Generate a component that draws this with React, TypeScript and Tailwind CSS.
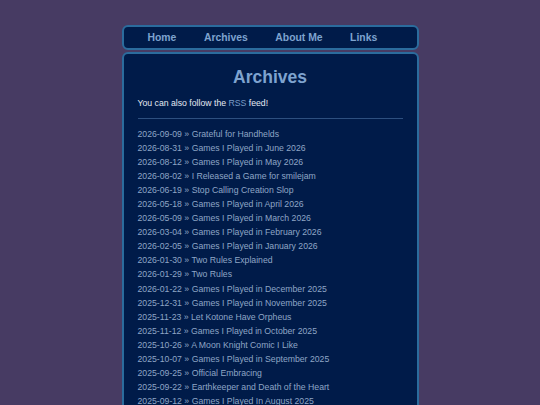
import React from "react";

const posts: [string, string][] = [
  ["2026-09-09", "Grateful for Handhelds"],
  ["2026-08-31", "Games I Played in June 2026"],
  ["2026-08-12", "Games I Played in May 2026"],
  ["2026-08-02", "I Released a Game for smilejam"],
  ["2026-06-19", "Stop Calling Creation Slop"],
  ["2026-05-18", "Games I Played in April 2026"],
  ["2026-05-09", "Games I Played in March 2026"],
  ["2026-03-04", "Games I Played in February 2026"],
  ["2026-02-05", "Games I Played in January 2026"],
  ["2026-01-30", "Two Rules Explained"],
  ["2026-01-29", "Two Rules"],
  ["2026-01-22", "Games I Played in December 2025"],
  ["2025-12-31", "Games I Played in November 2025"],
  ["2025-11-23", "Let Kotone Have Orpheus"],
  ["2025-11-12", "Games I Played in October 2025"],
  ["2025-10-26", "A Moon Knight Comic I Like"],
  ["2025-10-07", "Games I Played in September 2025"],
  ["2025-09-25", "Official Embracing"],
  ["2025-09-22", "Earthkeeper and Death of the Heart"],
  ["2025-09-12", "Games I Played In August 2025"],
];

export default function App() {
  return (
    <div
      className="min-h-screen bg-[#473b63] pt-[25px]"
      style={{ fontFamily: '"Liberation Sans", Arial, sans-serif' }}
    >
      <div className="mx-auto flex w-[297px] flex-col gap-[2px]">
        <nav className="flex h-[25px] items-center gap-[27.5px] rounded-[6px] border-2 border-[#2b6c9d] bg-[#001b49] pl-[24px] text-[10.4px] font-bold text-[#7ea3cf]">
          <a>Home</a>
          <a>Archives</a>
          <a>About Me</a>
          <a>Links</a>
        </nav>
        <main className="rounded-[6px] border-2 border-[#2b6c9d] bg-[#001b49] px-[14px] pt-[13px] pb-[40px]">
          <h1 className="text-center text-[17.5px] font-bold leading-[20px] text-[#7ea3cf]">
            Archives
          </h1>
          <p className="mt-[8.5px] text-[8.7px] leading-[14px] text-[#e4e9f2]">
            You can also follow the <a className="text-[#7a9cc6]">RSS</a> feed!
          </p>
          <hr className="mt-[8px] border-0 border-t border-[#2d4f7f]" />
          <ul className="mt-[8px] text-[8.7px] leading-[14.1px] text-[#8fa6c6]">
            {posts.map(([d, t]) => (
              <li key={d + t}>
                {d} » <a>{t}</a>
              </li>
            ))}
          </ul>
        </main>
      </div>
    </div>
  );
}
